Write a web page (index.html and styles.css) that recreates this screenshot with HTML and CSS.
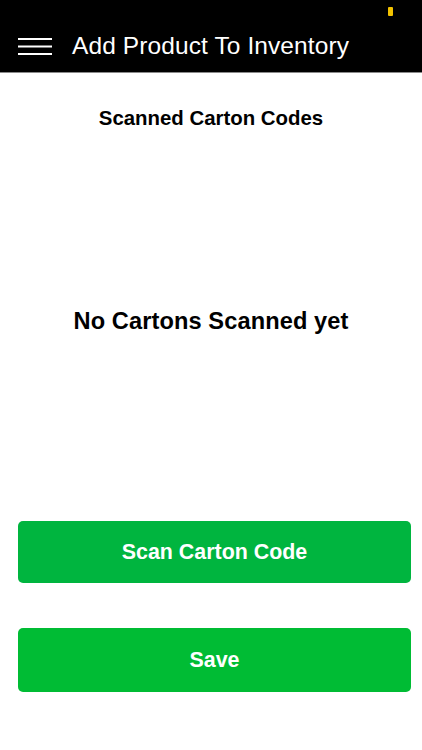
FILE: index.html
```html
<!DOCTYPE html>
<html>
<head>
<meta charset="utf-8">
<link rel="stylesheet" href="styles.css">
</head>
<body>
<div class="app">
  <header class="topbar">
    <span class="battery"></span>
    <div class="nav">
      <svg class="menu" width="34" height="18" viewBox="0 0 34 18">
        <rect x="0" y="0" width="34" height="2" fill="#fff"/>
        <rect x="0" y="7.5" width="34" height="2" fill="#fff"/>
        <rect x="0" y="15" width="34" height="2" fill="#fff"/>
      </svg>
      <h1 class="title">Add Product To Inventory</h1>
    </div>
  </header>
  <main class="content">
    <h2 class="section-title">Scanned Carton Codes</h2>
    <div class="empty">No Cartons Scanned yet</div>
    <div class="actions">
      <button class="btn btn-scan">Scan Carton Code</button>
      <button class="btn btn-save">Save</button>
    </div>
  </main>
</div>
</body>
</html>
```

FILE: styles.css
```css
* { box-sizing: border-box; }
html, body { margin: 0; padding: 0; }
body {
  width: 422px;
  height: 750px;
  background: #fff;
  font-family: "Liberation Sans", Arial, sans-serif;
  overflow: hidden;
}
.app { display: flex; flex-direction: column; height: 750px; }
.topbar {
  position: relative;
  height: 73px;
  background: #000;
  border-bottom: 1px solid #8a8a8a;
  padding: 38px 0 0 18px;
}
.battery {
  position: absolute;
  left: 388px;
  top: 7px;
  width: 5px;
  height: 9px;
  background: #f2c200;
  border-radius: 1px;
}
.nav { display: flex; align-items: center; gap: 20px; height: 18px; }
.menu { display: block; flex: none; }
.title {
  margin: 0;
  color: #fff;
  font-weight: 300;
  font-size: 24.5px;
  line-height: 18px;
  letter-spacing: 0.1px;
  position: relative;
  top: -1px;
}
.content {
  flex: 1;
  display: flex;
  flex-direction: column;
  align-items: center;
}
.section-title {
  margin: 0;
  padding-top: 33px;
  font-size: 20.4px;
  line-height: 24px;
  font-weight: 700;
  color: #000;
}
.empty {
  margin-top: 177px;
  font-size: 23.6px;
  line-height: 28px;
  font-weight: 700;
  color: #000;
  letter-spacing: 0.1px;
}
.actions {
  margin-top: 186px;
  width: 100%;
  padding: 0 11px 0 18px;
  display: flex;
  flex-direction: column;
  gap: 45px;
}
.btn {
  display: block;
  width: 100%;
  border: 0;
  border-radius: 5px;
  color: #fff;
  font-family: "Liberation Sans", Arial, sans-serif;
  font-weight: 700;
  font-size: 21.4px;
  padding: 0;
}
.btn-scan { height: 62px; background: #00b53f; }
.btn-save { height: 64px; background: #00bc34; }
```
